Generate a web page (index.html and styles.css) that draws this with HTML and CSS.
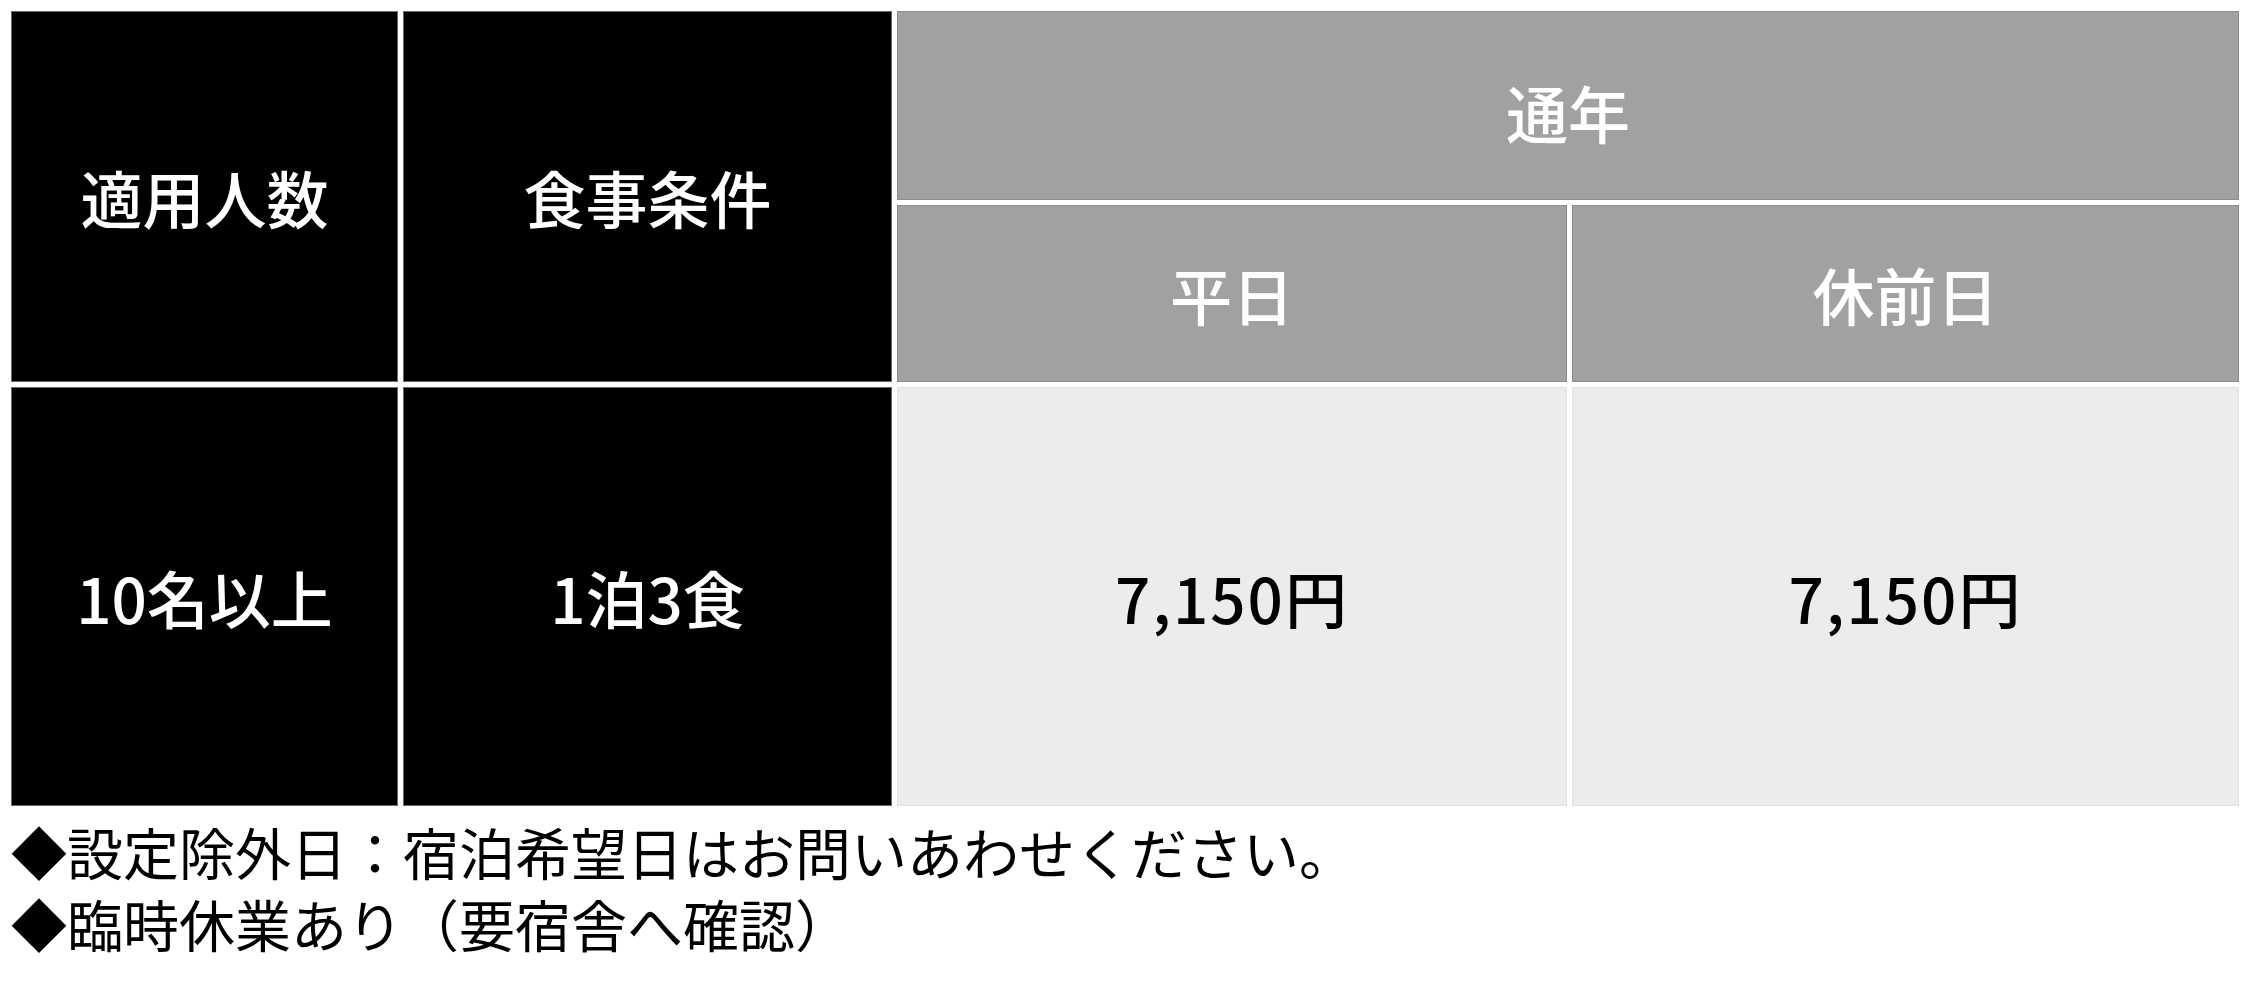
FILE: index.html
```html
<!DOCTYPE html>
<html lang="ja">
<head>
<meta charset="utf-8">
<title>料金表</title>
<link rel="stylesheet" href="styles.css">
</head>
<body>
<div class="page">
  <div class="rate-table">
    <div class="cell dark head-main">適用人数</div>
    <div class="cell dark head-meal">食事条件</div>
    <div class="cell gray head-year">通年</div>
    <div class="cell gray head-weekday">平日</div>
    <div class="cell gray head-holiday">休前日</div>
    <div class="cell dark body-main">10名以上</div>
    <div class="cell dark body-meal">1泊3食</div>
    <div class="cell light price">7,150円</div>
    <div class="cell light price">7,150円</div>
  </div>
  <div class="notes">
    <p class="note">◆設定除外日：宿泊希望日はお問いあわせください。</p>
    <p class="note">◆臨時休業あり（要宿舎へ確認）</p>
  </div>
</div>
</body>
</html>
```
FILE: styles.css
```css
html, body {
  margin: 0;
  padding: 0;
  background: #ffffff;
}

.page {
  padding: 11px 11px 0 11px;
  font-family: "Noto Sans CJK JP", "Noto Sans", sans-serif;
}

.rate-table {
  display: grid;
  grid-template-columns: 387px 489px 670px 667px;
  grid-template-rows: 189px 177px 419px;
  gap: 5px;
}

.cell {
  display: flex;
  align-items: center;
  justify-content: center;
  box-sizing: border-box;
  font-size: 62px;
  font-weight: 500;
  line-height: 1;
}

.dark {
  background: #000000;
  color: #ffffff;
  border: 1px solid #6a6a6a;
}

.gray {
  background: #a0a1a3;
  color: #ffffff;
  border: 1px solid #8c8d8f;
}

.light {
  background: #ececec;
  color: #000000;
  border: 1px solid #e2e2e2;
}

.head-main,
.head-meal {
  grid-row: 1 / span 2;
}

.head-year {
  grid-column: 3 / span 2;
  padding-top: 12px;
}

.price {
  letter-spacing: 2px;
}

.notes {
  margin-top: 9px;
}

.note {
  margin: 0;
  font-size: 56px;
  font-weight: 400;
  line-height: 72px;
  color: #000000;
  white-space: nowrap;
}
```
